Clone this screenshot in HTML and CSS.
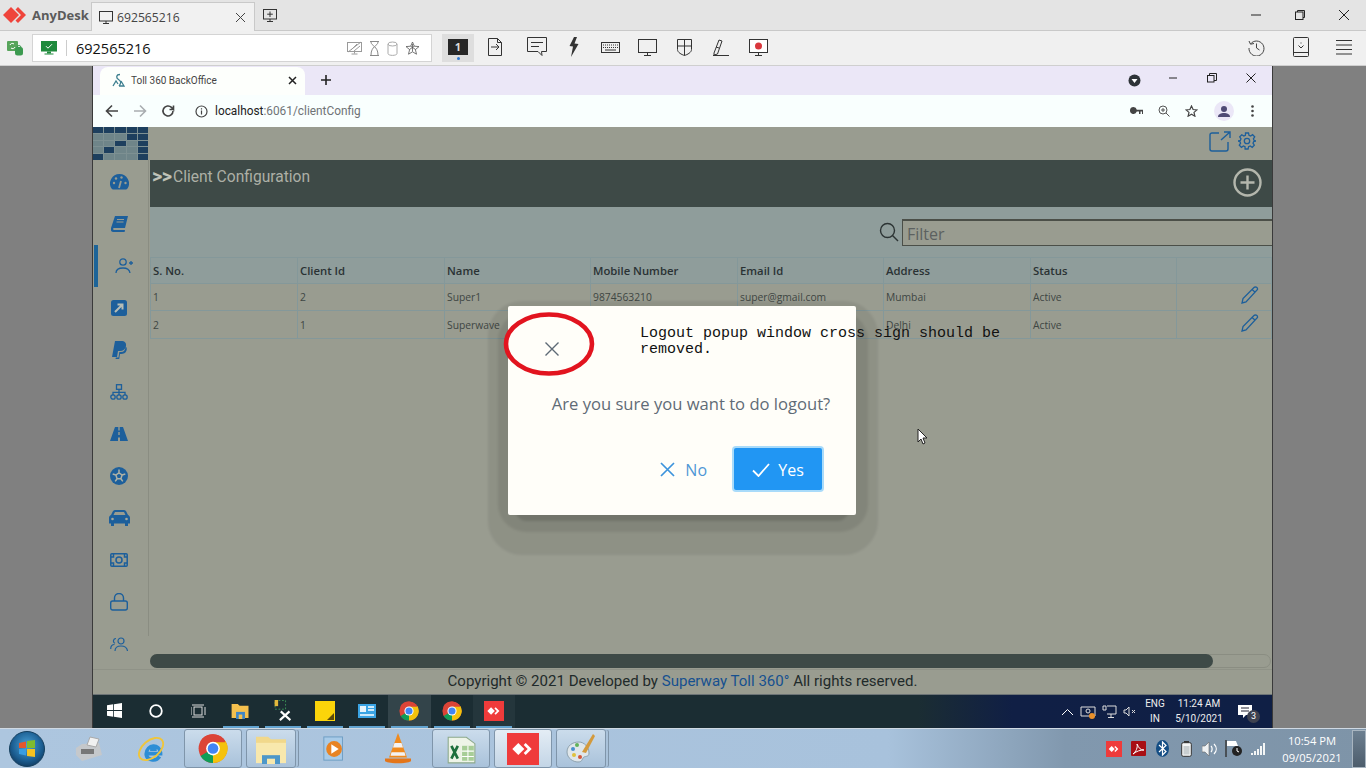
FILE: index.html
```html
<!DOCTYPE html>
<html lang="en">
<head>
<meta charset="utf-8">
<title>Toll 360 BackOffice</title>
<link rel="stylesheet" href="styles.css">
</head>
<body>
<svg class="defs" width="0" height="0" aria-hidden="true">
  <defs>
    <radialGradient id="orb" cx="50%" cy="40%" r="60%"><stop offset="0" stop-color="#4aa3d8"/><stop offset=".7" stop-color="#1c5f93"/><stop offset="1" stop-color="#123f66"/></radialGradient>
  </defs>
  <symbol id="chrome" viewBox="0 0 48 48">
    <circle cx="24" cy="24" r="23" fill="#db4437"/>
    <path d="M24 24 4 36A23 23 0 0 0 24 47l10-17z" fill="#0f9d58"/>
    <path d="M24 24 24 47A23 23 0 0 0 44 12H24z" fill="#f4c20d"/>
    <path d="M4 36 14 18 24 14h20A23 23 0 0 0 4 12z" fill="#db4437"/>
    <circle cx="24" cy="24" r="11" fill="#fff"/>
    <circle cx="24" cy="24" r="8.5" fill="#4285f4"/>
  </symbol>
  <symbol id="adsq" viewBox="0 0 24 24">
    <rect width="24" height="24" fill="#ef3b3b"/>
    <path d="M8.500 7.500 13 12l-4.500 4.500L4 12z" fill="#fff"/>
    <path d="M14 7.500 18.500 12 14 16.500l-1.500-1.500 3-3-3-3z" fill="#fff"/>
  </symbol>
</svg>

<header class="ad-tabs">
  <svg class="ad-logo" width="24" height="18" viewBox="0 0 24 18"><path d="M8 1l8 8-8 8-8-8z" fill="#ef443b"/><path d="M15 1l8 8-8 8-2.500-2.500L18 9l-5.500-5.500z" fill="#ef443b"/></svg>
  <span class="ad-name">AnyDesk</span>
  <div class="ad-tab">
    <svg width="16" height="15" viewBox="0 0 16 15" fill="none" stroke="#333"><rect x="1.500" y="1.500" width="13" height="9.500"/><path d="M8 11v2.500M5 13.500h6"/></svg>
    <span class="ad-tab-id">692565216</span>
    <svg class="ad-tab-x" width="11" height="11" viewBox="0 0 11 11" stroke="#444"><path d="M1 1l9 9M10 1l-9 9"/></svg>
  </div>
  <svg class="ad-new" width="16" height="15" viewBox="0 0 16 15" fill="none" stroke="#333"><rect x="1.500" y="1.500" width="13" height="9.500"/><path d="M8 3.500v5.500M5.200 6.200h5.600M8 11v2.500M5 13.500h6"/></svg>
  <div class="win-btns">
    <svg width="12" height="12" viewBox="0 0 12 12" stroke="#222"><path d="M1 6h10"/></svg>
    <svg width="12" height="12" viewBox="0 0 12 12" fill="none" stroke="#222"><rect x="1.500" y="3" width="7.500" height="7.500"/><path d="M3.500 3V1.500H10.500V8.500H9"/></svg>
    <svg width="12" height="12" viewBox="0 0 12 12" stroke="#222"><path d="M1 1l10 10M11 1 1 11"/></svg>
  </div>
</header>

<div class="ad-toolbar">
  <svg class="ad-status" width="16" height="16" viewBox="0 0 16 16"><rect x="0" y="1" width="11" height="10" rx="1" fill="#58a55c"/><path d="M3 5a2.500 2.500 0 0 1 4-1M8 7a2.500 2.500 0 0 1-4 1" stroke="#fff" fill="none"/><rect x="8" y="7" width="8" height="8.500" rx="2.500" fill="#3c9a50"/><path d="M10 7.500a2 2 0 0 1 4 0" stroke="#3c9a50" fill="none"/></svg>
  <div class="ad-address">
    <svg width="16" height="14" viewBox="0 0 16 14"><rect width="16" height="10.500" fill="#1f8a3c"/><rect x="6" y="10.500" width="4" height="2" fill="#1f8a3c"/><rect x="3.500" y="12.500" width="9" height="1" fill="#1f8a3c"/><path d="M5 5.200l2 2 4-4" stroke="#fff" fill="none"/></svg>
    <span class="ad-sep"></span>
    <span class="ad-id">692565216</span>
    <div class="ad-address-icons">
      <svg width="15" height="14" viewBox="0 0 15 14" fill="none" stroke="#9a9a9a"><rect x=".5" y="1.500" width="14" height="9"/><path d="M1 11 14 1M4 9 10 3M7 10 13 5M7.500 10.500v2M4.500 13h6"/></svg>
      <svg width="11" height="15" viewBox="0 0 11 15" fill="none" stroke="#8a8a8a"><path d="M1 .5h9M1 14.500h9M2 1c0 4 7 4 7 13M9 1c0 4-7 4-7 13"/></svg>
      <svg width="11" height="15" viewBox="0 0 11 15" fill="none" stroke="#aaa"><ellipse cx="5.500" cy="3" rx="4.500" ry="2"/><path d="M1 3v9.500c0 2.500 9 2.500 9 0V3"/></svg>
      <svg width="15" height="14" viewBox="0 0 15 14" fill="none" stroke="#555"><path d="M7.500 1l1.800 4.200 4.700.4-3.600 3 1.100 4.600-4-2.400-4 2.400 1.100-4.600-3.600-3 4.700-.4zM5.700 5.200l5 3.400M9.300 5.200l-5 3.400M7.500 3v7.500" stroke-width=".8"/></svg>
    </div>
  </div>
  <div class="ad-mon"><b>1</b><i></i></div>
  <div class="ad-tools">
    <svg class="t-file" width="14" height="18" viewBox="0 0 14 18" fill="none" stroke="#333"><path d="M.5.500h9l4 4v13H.500zM9.500.500v4h4M3 9h8M8 6l3 3-3 3"/></svg>
    <svg class="t-chat" width="20" height="20" viewBox="0 0 20 20" fill="none" stroke="#333"><path d="M.5.500h19v14h-5l.5 4-4-4H.500zM4 5.500h12M4 9.500h8"/></svg>
    <svg class="t-bolt" width="10" height="20" viewBox="0 0 10 20"><path d="M5 0h3L5.500 6.500 9.500 7 2 20l2-10.500L.5 9z" fill="#333"/></svg>
    <svg class="t-kb" width="19" height="11" viewBox="0 0 19 11" fill="none" stroke="#333"><rect x=".5" y=".5" width="18" height="10"/><path d="M2 3h15M2 5.500h15" stroke-dasharray="1 1"/><path d="M4 8h11"/></svg>
    <svg class="t-mon" width="19" height="17" viewBox="0 0 19 17" fill="none" stroke="#333"><rect x=".5" y=".5" width="18" height="13"/><path d="M9.500 13.500v3M6 16.500h7"/></svg>
    <svg class="t-shield" width="15" height="17" viewBox="0 0 15 17" fill="none" stroke="#333"><path d="M.5.500h14v10c0 3-4 5-7 6-3-1-7-3-7-6zM7.500.500v16M.5 7h14"/></svg>
    <svg class="t-pen" width="16" height="17" viewBox="0 0 16 17" fill="none" stroke="#333"><path d="M1 14 6 1l3 1-4.500 13-3.500 1zM3 8l3 1M0 16.500h16"/></svg>
    <svg class="t-rec" width="19" height="17" viewBox="0 0 19 17" fill="none" stroke="#333"><rect x=".5" y=".5" width="18" height="13" fill="#fff"/><circle cx="9.500" cy="7" r="3.500" fill="#d9373c" stroke="none"/><path d="M9.500 13.500v3M6 16.500h7"/></svg>
  </div>
  <div class="ad-right">
    <svg width="17" height="17" viewBox="0 0 17 17" fill="none" stroke="#444"><path d="M2.500 5A7.500 7.500 0 1 1 1 9M1 2l1.500 3.200L6 4.500M8.500 4.500V9l3 2"/></svg>
    <svg width="16" height="20" viewBox="0 0 16 20" fill="none" stroke="#333"><rect x=".5" y=".5" width="15" height="19" rx="1"/><path d="M.5 15.500h15M8 5.500v1M5.500 8.500 8 11l2.500-2.500" /></svg>
    <svg width="16" height="16" viewBox="0 0 16 16" stroke="#333"><path d="M0 1.500h16M0 6h16M0 10.500h16M0 15h16"/></svg>
  </div>
</div>

<div class="remote">
  <div class="window">
    <div class="cr-tabs">
      <div class="cr-tab">
        <svg width="13" height="15" viewBox="0 0 13 15" fill="none" stroke="#3d7f8f" stroke-width="1.300"><path d="M8 1.500C4 1.500 4 5 6.500 6.500S9.500 10 7 13M1 13l3-5 2 3M7 13h5L9 8"/></svg>
        <span class="cr-tab-title">Toll 360 BackOffice</span>
        <svg class="cr-tab-x" width="9" height="9" viewBox="0 0 9 9" stroke="#222" stroke-width="1.500"><path d="M1 1l7 7M8 1 1 8"/></svg>
      </div>
      <svg class="cr-new" width="12" height="12" viewBox="0 0 12 12" stroke="#222" stroke-width="1.600"><path d="M6 1v10M1 6h10"/></svg>
      <div class="cr-ctrls">
        <svg class="cr-prof" width="13" height="13" viewBox="0 0 13 13"><circle cx="6.500" cy="6.500" r="6" fill="#2e3338"/><path d="M3.500 5h6l-3 4z" fill="#fff"/></svg>
        <svg class="cr-min" width="10" height="10" viewBox="0 0 10 10" stroke="#222"><path d="M1 5h8"/></svg>
        <svg class="cr-max" width="10" height="10" viewBox="0 0 10 10" fill="none" stroke="#222"><rect x=".5" y="2.500" width="6.500" height="6.500"/><path d="M2.500 2.500V.5h7v7H7"/></svg>
        <svg class="cr-close" width="10" height="10" viewBox="0 0 10 10" stroke="#222"><path d="M.5.500l9 9M9.500.500l-9 9"/></svg>
      </div>
    </div>
    <div class="cr-bar">
      <svg class="nav" width="14" height="14" viewBox="0 0 14 14" fill="none" stroke="#444" stroke-width="1.600"><path d="M13 7H2M7 1.500 1.500 7 7 12.500"/></svg>
      <svg class="nav" width="14" height="14" viewBox="0 0 14 14" fill="none" stroke="#a9adb0" stroke-width="1.600"><path d="M1 7h11M7 1.500 12.500 7 7 12.500"/></svg>
      <svg class="nav" width="14" height="14" viewBox="0 0 14 14" fill="none" stroke="#444" stroke-width="1.600"><path d="M12 7a5 5 0 1 1-1.500-3.600L12.500 5.500V1.500M12.500 5.500H8.500"/></svg>
      <div class="omni">
        <svg width="13" height="13" viewBox="0 0 13 13" fill="none" stroke="#444" stroke-width="1.200"><circle cx="6.500" cy="6.500" r="5.500"/><path d="M6.500 5.500v4M6.500 3.200v1.200"/></svg>
        <span class="url"><b>localhost</b>:6061/clientConfig</span>
      </div>
      <div class="cr-icons">
        <svg class="ci" width="13" height="8" viewBox="0 0 13 8" fill="#444"><path d="M3.500 0a3.500 3.500 0 1 0 3.300 4.600H9V7h1.500V4.600H12V7h1V2.800H6.800A3.500 3.500 0 0 0 3.500 0z"/></svg>
        <svg class="ci" width="12" height="12" viewBox="0 0 12 12" fill="none" stroke="#555"><circle cx="5" cy="5" r="4"/><path d="M8 8l3.500 3.500M3 5h4M5 3v4"/></svg>
        <svg class="ci" width="13" height="12" viewBox="0 0 13 12" fill="none" stroke="#444" stroke-width="1.200"><path d="M6.500 1l1.600 3.500 3.900.4-3 2.500.9 3.800-3.400-2-3.400 2 .9-3.800-3-2.500 3.900-.4z"/></svg>
        <span class="avatar"><svg width="12" height="11" viewBox="0 0 12 11" fill="#4f4a75"><circle cx="6" cy="3" r="3"/><path d="M0 11c0-3 3-4 6-4s6 1 6 4z"/></svg></span>
        <svg class="ci dots" width="3" height="12" viewBox="0 0 3 12" fill="#444"><circle cx="1.500" cy="1.500" r="1.300"/><circle cx="1.500" cy="6" r="1.300"/><circle cx="1.500" cy="10.500" r="1.300"/></svg>
      </div>
    </div>

    <div class="page">
      <div class="page-main">
        <aside class="sidebar">
          <div class="logo">
            <i class="d"></i><i class="d"></i><i class="d"></i><i class="d"></i><i class="d"></i>
            <i></i><i></i><i></i><i class="d"></i><i class="d"></i>
            <i></i><i></i><i class="d"></i><i></i><i class="d"></i>
            <i></i><i class="d"></i><i></i><i></i><i class="d"></i>
            <i class="d"></i><i></i><i></i><i></i><i class="d"></i>
          </div>
          <nav class="side-nav">
            <a class="side-item"><svg width="19" height="16" viewBox="0 0 19 16"><path d="M9.500 0a9.500 9.500 0 0 0-8 14.600c.3.500.8.800 1.300.8h13.400c.5 0 1-.3 1.300-.8A9.500 9.500 0 0 0 9.500 0z" fill="#1d5f9b"/><path d="M9 14l2-7" stroke="#999c90" stroke-width="1.800"/><circle cx="4" cy="9" r="1.200" fill="#999c90"/><circle cx="6" cy="4.500" r="1.200" fill="#999c90"/><circle cx="11.500" cy="3.500" r="1.200" fill="#999c90"/><circle cx="15.500" cy="9" r="1.200" fill="#999c90"/></svg></a>
            <a class="side-item"><svg width="17" height="16" viewBox="0 0 17 16"><path d="M4 0h13l-3 12H3c-1 0-1.300 2 0 2h11l-.4 2H2c-2 0-2.500-2-2-4z" fill="#1d5f9b"/><path d="M6 3.500h7M5.500 6h7" stroke="#999c90"/></svg></a>
            <a class="side-item is-active"><svg width="18" height="16" viewBox="0 0 18 16" fill="none" stroke="#1d5f9b" stroke-width="1.300"><circle cx="8" cy="4" r="3.200"/><path d="M1 15c0-3.500 3-5 7-5s6.500 1.500 7 5M14 5h4M16 3v4"/></svg></a>
            <a class="side-item"><svg width="16" height="16" viewBox="0 0 16 16"><rect width="16" height="16" rx="2.500" fill="#1d5f9b"/><path d="M4 12 11 5M6.500 4.500H11.500V9.500" stroke="#b6bdb6" stroke-width="2" fill="none"/></svg></a>
            <a class="side-item"><svg width="15" height="18" viewBox="0 0 15 18" fill="#1d5f9b"><path d="M3 0h6c4 0 5.500 2 5 5-.6 3.500-3 5-6 5H6l-1 6H0z"/><path d="M13.500 5.500c1.500 1 1.500 2.500 1 4-.8 2.600-3 3.500-5.500 3.500H8L7.200 18H3.500l.4-1.500h2.600L7.300 11H9c3 0 4.500-2 4.500-5.500z"/></svg></a>
            <a class="side-item"><svg width="18" height="16" viewBox="0 0 18 16" fill="none" stroke="#1d5f9b" stroke-width="1.300"><rect x="6.500" y=".7" width="5" height="4.600"/><path d="M9 5.300V8M3 11V8.300h12V11M9 8v3"/><circle cx="3" cy="13" r="2.200"/><circle cx="9" cy="13" r="2.200"/><circle cx="15" cy="13" r="2.200"/></svg></a>
            <a class="side-item"><svg width="18" height="14" viewBox="0 0 18 14" fill="#1d5f9b"><path d="M5 0h3.300v3.500h1.400V0H13l5 14h-8V10.500H8V14H0zM8.300 5v3h1.400V5z"/></svg></a>
            <a class="side-item"><svg width="18" height="18" viewBox="0 0 18 18"><circle cx="9" cy="9" r="9" fill="#1d5f9b"/><path d="M9 5.800 5.900 8l1.200 3.700h3.800L12.100 8zM9 5.800V2.500M5.900 8 2.700 7M12.100 8l3.200-1M7.100 11.700 5.200 14.400M10.900 11.700l1.900 2.700" stroke="#aeb1a5" stroke-width="1.500" fill="none"/></svg></a>
            <a class="side-item"><svg width="21" height="16" viewBox="0 0 21 16" fill="#1d5f9b"><path d="M6 0h9c1.500 0 2 1 2.500 2L19 5c1.300.5 2 1.500 2 3v5.500h-2V16h-3v-2.500H5V16H2v-2.500H0V8c0-1.500.7-2.500 2-3l1.500-3C4 1 4.500 0 6 0zm0 2-1.500 3h12L15 2z"/><circle cx="3.500" cy="9" r="1.300" fill="#a5a89c"/><circle cx="17.500" cy="9" r="1.300" fill="#a5a89c"/></svg></a>
            <a class="side-item"><svg width="18" height="14" viewBox="0 0 18 14" fill="none" stroke="#1d5f9b" stroke-width="1.500"><rect x=".8" y=".8" width="16.400" height="12.400" rx="1"/><circle cx="9" cy="7" r="3"/><path d="M1 4h2.500V1M17 4h-2.500V1M1 10h2.500v3M17 10h-2.500v3"/></svg></a>
            <a class="side-item"><svg width="18" height="18" viewBox="0 0 18 18" fill="none" stroke="#1d5f9b" stroke-width="1.400"><rect x=".7" y="8" width="16.600" height="9" rx="2"/><path d="M4.500 8V5a4.500 4.500 0 0 1 9 0v3"/></svg></a>
            <a class="side-item"><svg width="18" height="15" viewBox="0 0 18 15" fill="none" stroke="#1d5f9b" stroke-width="1.200"><circle cx="11" cy="4" r="3"/><path d="M5 14c0-3.500 2.500-5 6-5s6 1.500 6.500 5M6 1.500a2.500 2.500 0 0 0-1 4.800M.7 12c0-3 1.500-4.500 3.800-4.500"/></svg></a>
          </nav>
        </aside>
        <main class="content">
          <div class="top-actions">
            <svg width="22" height="21" viewBox="0 0 22 21" fill="none" stroke="#1d5f9b" stroke-width="1.400"><path d="M10 2H3a2 2 0 0 0-2 2v14a2 2 0 0 0 2 2h14a2 2 0 0 0 2-2v-7M12 9l9-8M15 1h6v6"/></svg>
            <svg width="18" height="18" viewBox="0 0 18 18" fill="none" stroke="#1d5f9b" stroke-width="1.300"><circle cx="9" cy="9" r="2.700"/><path d="M7.500 1h3l.5 2.300 1.600.7 2-1.300 2.100 2.100-1.300 2 .7 1.600L18 9v0l-2.300.5-.7 1.700 1.300 2-2.100 2.100-2-1.300-1.600.7-.5 2.300h-3L7 14.700l-1.600-.7-2 1.300-2.100-2.100 1.300-2-.7-1.700L0 9l2.300-.5.700-1.600-1.300-2 2.100-2.100 2 1.300L7.400 3.300z"/></svg>
          </div>
          <div class="title-bar">
            <h1 class="title"><span class="chev">&gt;&gt;</span>Client Configuration</h1>
            <svg class="add" width="29" height="29" viewBox="0 0 29 29" fill="none" stroke="#b4b7ad" stroke-width="2.400"><circle cx="14.500" cy="14.500" r="13"/><path d="M14.500 7.500v14M7.500 14.500h14"/></svg>
          </div>
          <div class="filter-bar">
            <svg width="20" height="20" viewBox="0 0 20 20" fill="none" stroke="#2c3434" stroke-width="1.400"><circle cx="8.500" cy="8.500" r="7"/><path d="M13.500 13.500l5.500 5.500"/></svg>
            <div class="filter-input">Filter</div>
          </div>
          <table class="grid">
            <colgroup><col class="c1"><col class="c1"><col class="c2"><col class="c1"><col class="c2"><col class="c1"><col class="c2"><col></colgroup>
            <thead><tr><th>S. No.</th><th>Client Id</th><th>Name</th><th>Mobile Number</th><th>Email Id</th><th>Address</th><th>Status</th><th></th></tr></thead>
            <tbody>
              <tr><td>1</td><td>2</td><td>Super1</td><td>9874563210</td><td>super@gmail.com</td><td>Mumbai</td><td>Active</td><td class="edit"><svg width="18" height="18" viewBox="0 0 18 18" fill="none" stroke="#1d5f9b" stroke-width="1.300"><path d="M13 1.500c1-1 4-.5 3.500 2L5 16l-4 1 1-4.500zM11 3.500l3.500 3"/></svg></td></tr>
              <tr><td>2</td><td>1</td><td>Superwave</td><td></td><td></td><td>Delhi</td><td>Active</td><td class="edit"><svg width="18" height="18" viewBox="0 0 18 18" fill="none" stroke="#1d5f9b" stroke-width="1.300"><path d="M13 1.500c1-1 4-.5 3.500 2L5 16l-4 1 1-4.500zM11 3.500l3.500 3"/></svg></td></tr>
            </tbody>
          </table>
          <div class="h-scroll"><div class="h-thumb"></div></div>
        </main>
      </div>
      <footer class="copy">Copyright © 2021 Developed by <a>Superway Toll 360°</a> All rights reserved.</footer>

      <div class="dlg-shadow s1"></div>
      <div class="dlg-shadow s2"></div>
      <div class="dlg-shadow s3"></div>
      <section class="dialog">
        <svg class="dlg-x" width="14" height="14" viewBox="0 0 14 14" stroke="#5d6a75" stroke-width="1.400"><path d="M.5.500l13 13M13.500.500l-13 13"/></svg>
        <p class="dlg-msg">Are you sure you want to do logout?</p>
        <div class="dlg-actions">
          <button class="btn-no"><svg width="15" height="15" viewBox="0 0 15 15" stroke="#3d93dc" stroke-width="1.700"><path d="M1 1l13 13M14 1 1 14"/></svg>No</button>
          <button class="btn-yes"><svg width="18" height="14" viewBox="0 0 18 14" fill="none" stroke="#fff" stroke-width="1.800"><path d="M1 7.500 6.500 13 17 1"/></svg>Yes</button>
        </div>
        <svg class="ring" width="92" height="66" viewBox="0 0 92 66" fill="none"><ellipse cx="46" cy="33" rx="43" ry="29.500" stroke="#e2141f" stroke-width="4.600"/></svg>
        <p class="note">Logout popup window cross sign should be<br>removed.</p>
      </section>
      <svg class="cursor" width="12" height="18" viewBox="0 0 12 18"><path d="M1 1v13l3-3 2 5 2-1-2-5h4z" fill="#fff" stroke="#222"/></svg>
    </div>

    <div class="w10bar">
      <div class="w10-apps">
        <span class="w10-slot"><svg width="15" height="15" viewBox="0 0 15 15" fill="#fff"><path d="M0 2.200 6.200 1.300V7H0zM7 1.200 15 0v7H7zM0 8h6.200v5.700L0 12.800zM7 8h8v7l-8-1.200z"/></svg></span>
        <span class="w10-slot"><svg width="14" height="14" viewBox="0 0 14 14" fill="none" stroke="#fff" stroke-width="1.800"><circle cx="7" cy="7" r="5.800"/></svg></span>
        <span class="w10-slot"><svg width="15" height="14" viewBox="0 0 15 14" fill="none" stroke="#ddd"><rect x="3" y="3" width="8" height="8"/><path d="M1 1h12M1 13h12M14 3v8M0 3v8"/></svg></span>
        <span class="w10-slot on"><svg width="19" height="16" viewBox="0 0 20 18"><path d="M0 1h7l2 2h10v14H0z" fill="#f4c04e"/><rect x="5" y="10" width="10" height="8" fill="#3f86c6"/><rect x="8" y="13" width="4" height="5" fill="#f4c04e"/></svg></span>
        <span class="w10-slot on"><svg width="21" height="21" viewBox="0 0 22 24" fill="none"><rect x="2.500" y=".5" width="12" height="10" stroke="#3f9b5a" stroke-dasharray="2 2"/><rect x="2" y="0" width="4" height="7" fill="#e3b93c"/><path d="M9 13l11 10M19 13 8 23" stroke="#fff" stroke-width="2.400"/></svg></span>
        <span class="w10-slot on"><svg width="20" height="20" viewBox="0 0 20 20"><rect width="20" height="20" fill="#fbd40a"/><path d="M19 12v7h-7z" fill="#5c4a0a"/></svg></span>
        <span class="w10-slot on"><svg width="18" height="14" viewBox="0 0 18 14"><rect width="18" height="14" fill="#3ba4e4"/><rect x="2" y="2" width="6" height="6" fill="#e7f4fb"/><path d="M10 3h6M10 6h6M2 11h14" stroke="#fff" stroke-width="1.300"/></svg></span>
        <span class="w10-slot on act"><svg width="20" height="20" viewBox="0 0 48 48"><use href="#chrome"/></svg></span>
        <span class="w10-slot on"><svg width="20" height="20" viewBox="0 0 48 48"><use href="#chrome"/></svg></span>
        <span class="w10-slot on soft"><svg width="20" height="20" viewBox="0 0 24 24"><use href="#adsq"/></svg></span>
      </div>
      <div class="w10-tray">
        <svg width="13" height="8" viewBox="0 0 13 8" fill="none" stroke="#fff"><path d="M1 7l5.500-5.500L12 7"/></svg>
        <svg width="16" height="15" viewBox="0 0 16 15" fill="none" stroke="#ddd"><path d="M1 3h14v9H1z"/><circle cx="8" cy="7" r="2"/><circle cx="12" cy="12" r="3" fill="#e9902a" stroke="none"/></svg>
        <svg width="15" height="14" viewBox="0 0 15 14" fill="none" stroke="#ddd"><path d="M5 1h9v8H5M1 1h3v4H1zM9 9v3M6 12.500h6"/></svg>
        <svg width="13" height="11" viewBox="0 0 13 11" fill="none" stroke="#ddd"><path d="M1 4h2l3-3v9L3 7H1zM9 4l3 3M12 4 9 7"/></svg>
        <span class="lang">ENG<br>IN</span>
        <span class="clock">11:24 AM<br>5/10/2021</span>
        <span class="notif"><svg width="14" height="13" viewBox="0 0 14 13"><path d="M0 0h14v10H8l-3 3v-3H0z" fill="#fff"/><path d="M3 3h8M3 6h8" stroke="#223"/></svg><i>3</i></span>
      </div>
    </div>
  </div>
</div>

<footer class="w7bar">
  <div class="w7-apps">
    <span class="w7-slot"><svg width="36" height="36" viewBox="0 0 36 36"><circle cx="18" cy="18" r="17.500" fill="url(#orb)" stroke="#16405f"/><path d="M10 12l7-1.500v6.500h-7z" fill="#e5572d"/><path d="M18 10l8-1v8h-8z" fill="#7fbb30"/><path d="M10 18h7v6.500l-7-1.500z" fill="#3a9de0"/><path d="M18 18h8v8l-8-1z" fill="#f5c220"/></svg></span>
    <span class="w7-slot"><svg width="26" height="28" viewBox="0 0 26 28"><path d="M0 13l6-4 17-1 3 12-20 6-6-6z" fill="#c5c8cb"/><path d="M14 2l9 2-3 8-9-2z" fill="#f1f1f1" stroke="#aaa"/><rect x="5" y="14" width="13" height="5" fill="#777"/></svg></span>
    <span class="w7-slot"><svg width="32" height="34" viewBox="0 0 34 34" fill="none"><path d="M26 22H11c.5-10 14-11 15-1zM11 22c0 7 10 9 14 3M15 17h7" stroke="#2d8ed6" stroke-width="4"/><ellipse cx="16" cy="17" rx="15" ry="9" transform="rotate(-40 16 17)" stroke="#efc53b" stroke-width="2"/></svg></span>
    <span class="w7-slot btn"><svg width="30" height="31" viewBox="0 0 48 48"><use href="#chrome"/></svg></span>
    <span class="w7-slot btn stack"><svg width="32" height="30" viewBox="0 0 32 34" preserveAspectRatio="none"><path d="M1 3h12l3 3h15v27H1z" fill="#f1d88b"/><path d="M1 10h30v23H1z" fill="#f8e8ad"/><rect x="7" y="24" width="18" height="10" fill="#4d97c9"/><rect x="12" y="28" width="8" height="6" fill="#f8e8ad"/></svg></span>
    <span class="w7-slot"><svg width="26" height="26" viewBox="0 0 26 28"><rect x="1" y="1" width="20" height="25" fill="#a8cbe8" stroke="#6b9cc3"/><circle cx="12" cy="14" r="8.500" fill="#e88323"/><path d="M9 9l8 5-8 5z" fill="#fff"/></svg></span>
    <span class="w7-slot"><svg width="26" height="31" viewBox="0 0 26 34" preserveAspectRatio="none"><path d="M13 0l9 27H4z" fill="#f08a1d"/><path d="M9.500 11h7l1.500 5H8zM6.500 21h13l1 4H5.500z" fill="#f3f3f3"/><path d="M0 28h26v3c-5 3-21 3-26 0z" fill="#e4761a"/></svg></span>
    <span class="w7-slot btn wide"><svg width="32" height="32" viewBox="0 0 30 30"><path d="M3 4h17l8 6v18H3z" fill="#eef4e8" stroke="#8da98b"/><path d="M16 12h11v14H16z" fill="#a7cd97"/><path d="M16 17h11M16 22h11M21.500 12v14" stroke="#fff"/><path d="M4 12h11v12H4z" fill="#eaf2e2"/><path d="M6 12l6 12M12 12 6 24" stroke="#1d6f3c" stroke-width="2.500"/></svg></span>
    <span class="w7-slot btn light"><svg width="32" height="32" viewBox="0 0 24 24"><use href="#adsq"/></svg></span>
    <span class="w7-slot btn stack"><svg width="30" height="32" viewBox="0 0 30 32"><path d="M13 9C6 9 1 13 1 19c0 6 6 10 11 10 5 0 4-4 6-5s5 0 5-4c0-6-5-11-10-11z" fill="#dfe6ea" stroke="#8ea2ae"/><circle cx="7" cy="16" r="2" fill="#4a8fcf"/><circle cx="11" cy="12" r="2" fill="#61b25b"/><circle cx="8" cy="22" r="2" fill="#e0c13c"/><circle cx="14" cy="24" r="2" fill="#d2553d"/><path d="M27 1l2 2-9 17-4-1z" fill="#d39a3d"/></svg></span>
  </div>
  <div class="w7-tray">
    <svg width="16" height="16" viewBox="0 0 24 24"><use href="#adsq"/></svg>
    <svg width="15" height="15" viewBox="0 0 15 15"><rect width="15" height="15" rx="1" fill="#a80f14"/><path d="M2 13c3-2 5-7 4-10 2 4 3 6 7 6-4 0-7 1-11 4z" fill="none" stroke="#fff"/></svg>
    <svg width="13" height="17" viewBox="0 0 13 17"><ellipse cx="6.500" cy="8.500" rx="6.500" ry="8.500" fill="#134d84"/><path d="M3 5l7 6.500-3.500 3.500v-13L10 5.500 3 12" fill="none" stroke="#fff" stroke-width="1.200"/></svg>
    <svg width="11" height="16" viewBox="0 0 11 16"><rect x="3" y="0" width="5" height="2" fill="#333"/><rect x=".7" y="1.700" width="9.600" height="13.600" rx="1.500" fill="#f4f6f6" stroke="#333"/><rect x="2.500" y="5" width="6" height="8.500" fill="#c8ced0"/></svg>
    <svg width="16" height="14" viewBox="0 0 16 14" fill="none"><path d="M0 4h3l4-4v14l-4-4H0z" fill="#eef1f3" stroke="#666" stroke-width=".6"/><path d="M9 4c1.500 1.500 1.500 4.500 0 6M12 2c3 3 3 7 0 10" stroke="#fff" stroke-width="1.200"/></svg>
    <svg width="18" height="17" viewBox="0 0 18 17"><path d="M1 0v17" stroke="#333" stroke-width="1.400"/><path d="M2 1h9l2 5H2z" fill="#fff"/><circle cx="12" cy="11" r="5" fill="#222"/><path d="M12 8v3l2 1" stroke="#fff" fill="none"/></svg>
    <svg width="15" height="12" viewBox="0 0 15 12" fill="#f4f6f6"><rect x="0" y="10" width="2" height="2"/><rect x="3" y="8" width="2" height="4"/><rect x="6" y="6" width="2" height="6"/><rect x="9" y="3" width="2" height="9"/><rect x="12" y="0" width="2" height="12"/></svg>
    <span class="w7-clock">10:54 PM<br>09/05/2021</span>
    <span class="show-desktop"></span>
  </div>
</footer>
</body>
</html>
```

FILE: styles.css
```css
* { box-sizing: border-box; }
html, body { margin: 0; padding: 0; }
body {
  width: 1366px;
  height: 768px;
  overflow: hidden;
  display: flex;
  flex-direction: column;
  font-family: "Open Sans", "Liberation Sans", sans-serif;
  background: #808080;
}
svg { display: block; flex: none; }
.defs { position: absolute; }

/* AnyDesk tabs */
.ad-tabs {
  height: 31px;
  flex: none;
  display: flex;
  align-items: center;
  background: #e4e4e4;
  border-bottom: 1px solid #c9c9c9;
  padding-left: 3px;
}
.ad-name { margin-left: 5px; font-size: 13px; font-weight: 700; color: #5b5b5b; width: 59px; }
.ad-tab {
  align-self: flex-end;
  width: 164px;
  height: 29px;
  margin-bottom: -1px;
  display: flex;
  align-items: center;
  padding-left: 6px;
  background: #f1f1f1;
  border: 1px solid #c9c9c9;
  border-bottom: 0;
}
.ad-tab-id { margin-left: 3px; font-size: 12.2px; color: #444; }
.ad-tab-x { margin-left: 55px; }
.ad-new { margin-left: 7px; }
.win-btns { margin-left: auto; width: 116px; padding-right: 16px; display: flex; justify-content: space-between; }

/* AnyDesk toolbar */
.ad-toolbar {
  height: 35px;
  flex: none;
  display: flex;
  align-items: center;
  background: #f0f0f0;
  border-bottom: 1px solid #cfcfcf;
  padding-left: 7px;
}
.ad-address {
  width: 400px;
  height: 28px;
  margin-left: 9px;
  display: flex;
  align-items: center;
  padding-left: 8px;
  background: #fff;
  border: 1px solid #d4d4d4;
}
.ad-sep { width: 1px; height: 16px; background: #ccc; margin-left: 9px; }
.ad-id { margin-left: 9px; font-size: 14.5px; color: #111; }
.ad-address-icons { margin-left: auto; margin-right: 11px; display: flex; align-items: center; gap: 7px; }
.ad-mon {
  width: 32px;
  height: 28px;
  margin-left: 10px;
  background: #dedede;
  display: flex;
  flex-direction: column;
  align-items: center;
  padding-top: 5px;
}
.ad-mon b { width: 20px; height: 16px; background: #272727; color: #ddd; font-size: 11px; line-height: 16px; text-align: center; }
.ad-mon i { width: 3px; height: 3px; border-radius: 50%; background: #2f78d0; margin-top: 2px; }
.ad-tools { display: flex; align-items: center; margin-left: 14px; margin-top: -2px; }
.t-chat { margin-left: 25px; }
.t-bolt { margin-left: 22px; }
.t-kb { margin-left: 22px; }
.t-mon { margin-left: 18px; }
.t-shield { margin-left: 20px; }
.t-pen { margin-left: 21px; }
.t-rec { margin-left: 20px; }
.ad-right { margin-left: auto; margin-top: -2px; width: 118px; padding-right: 14px; display: flex; align-items: center; justify-content: space-between; }

/* Remote area */
.remote { height: 662px; flex: none; padding-left: 92px; background: #808080; }
.window {
  width: 1181px;
  height: 662px;
  display: flex;
  flex-direction: column;
  border-left: 1px solid #3a3a3a;
  border-right: 1px solid #3a3a3a;
}

/* Chrome */
.cr-tabs { height: 29px; flex: none; display: flex; align-items: flex-end; background: #ebe7f7; padding-left: 7px; }
.cr-tab {
  width: 205px;
  height: 28px;
  display: flex;
  align-items: center;
  padding: 0 8px 2px 12px;
  background: #fdfffc;
  border-radius: 8px 8px 0 0;
}
.cr-tab-title { margin-left: 6px; font-size: 10px; color: #444; font-family: "Roboto", sans-serif; }
.cr-tab-x { margin-left: auto; }
.cr-new { margin: 0 0 9px 15px; }
.cr-ctrls { margin-left: auto; align-self: stretch; display: flex; align-items: center; padding: 0 16px 6px 0; }
.cr-min { margin-left: 27px; }
.cr-max { margin-left: 29px; }
.cr-close { margin-left: 29px; }
.cr-prof { margin-top: 5px; }
.cr-bar { height: 32px; flex: none; display: flex; align-items: center; background: #f9fffe; padding-left: 12px; }
.nav { margin-right: 14px; }
.omni { height: 26px; display: flex; align-items: center; margin-left: 6px; gap: 7px; }
.url { font-size: 11.85px; color: #6f7376; font-family: "Roboto", sans-serif; }
.url b { font-weight: 400; color: #222; }
.cr-icons { margin-left: auto; display: flex; align-items: center; padding-right: 18px; }
.cr-icons .ci { margin-left: 15px; }
.avatar { width: 20px; height: 20px; border-radius: 50%; background: #ebe7f7; margin-left: 16px; display: flex; align-items: center; justify-content: center; }
.cr-icons .dots { margin-left: 17px; }

/* Page */
.page { position: relative; flex: 1; min-height: 0; display: flex; flex-direction: column; background: #999c90; }
.page-main { flex: 1; min-height: 0; display: flex; }
.sidebar { position: relative; width: 57px; flex: none; }
.sidebar::after { content: ""; position: absolute; right: 1px; top: 33px; height: 476px; width: 1px; background: #8a8d82; }
.logo { height: 33px; width: 55px; display: grid; grid-template-columns: repeat(5, 1fr); grid-template-rows: repeat(5, 1fr); gap: 1px; background: #7d9092; }
.logo i { background: #6f8589; }
.logo i.d { background: #1d3f5e; }
.side-nav { padding-top: 1px; }
.side-item { height: 42px; display: flex; align-items: center; justify-content: center; padding-right: 5px; }
.side-item.is-active { border-left: 4px solid #1d6498; margin-left: 1px; padding-right: 0; }
.content { flex: 1; min-width: 0; display: flex; flex-direction: column; }
.top-actions { height: 33px; flex: none; display: flex; align-items: center; justify-content: flex-end; gap: 7px; padding: 0 16px 5px 0; }
.title-bar { height: 47px; flex: none; background: #3e4a47; display: flex; align-items: flex-start; padding: 7px 0 0 2px; }
.title { margin: 0; font-size: 15.6px; line-height: 20px; font-weight: 400; color: #adb0a6; font-family: "Roboto", sans-serif; display: flex; }
.chev { font-weight: 700; font-size: 20px; line-height: 18px; letter-spacing: -.5px; width: 21px; color: #bfc2b8; }
.add { margin: 1px 10px 0 auto; }
.filter-bar { height: 50px; flex: none; display: flex; align-items: center; justify-content: flex-end; background: #8f9d9b; }
.filter-input {
  width: 370px;
  height: 27px;
  margin-left: 3px;
  padding: 4px 0 0 4px;
  background: #999c90;
  border: 1px solid #4b4f48;
  border-right: 0;
  border-width: 2px 0 1px 1px;
  font-size: 16px;
  line-height: 19px;
  color: #5c6160;
}
.grid { width: 1122px; border-collapse: collapse; table-layout: fixed; flex: none; }
.grid .c1 { width: 147px; }
.grid .c2 { width: 146px; }
.grid th, .grid td { border: 1px solid #84989a; padding: 0 0 0 2px; text-align: left; overflow: hidden; white-space: nowrap; }
.grid th { height: 26px; background: #8f9d9b; font-size: 11.3px; font-weight: 600; color: #2a3234; }
.grid td { height: 27px; font-size: 10.3px; color: #3e4643; }
.grid tbody tr:last-child td { height: 28px; }
.grid .edit { padding: 0 12px 0 0; }
.grid .edit svg { margin: -4px 0 0 auto; }
.h-scroll { margin-top: auto; margin-bottom: 1px; width: 1121px; height: 14px; border: 1px solid #8a8d82; border-radius: 7px; }
.h-thumb { width: 1063px; height: 14px; margin: -1px 0 0 -1px; background: #3e4a47; border-radius: 7px; }
.copy {
  height: 25px;
  flex: none;
  border-top: 1px solid #8f9287;
  text-align: center;
  font-size: 15.05px;
  line-height: 22px;
  color: #1f2a2a;
  font-family: "Roboto", sans-serif;
}
.copy a { color: #16508f; }

/* Dialog */
.dlg-shadow { position: absolute; filter: blur(1px); }
.s1 { left: 395px; top: 174px; width: 390px; height: 254px; border-radius: 34px; background: rgba(0, 0, 0, .07); }
.s2 { left: 405px; top: 185px; width: 370px; height: 220px; border-radius: 28px; background: rgba(0, 0, 0, .08); }
.s3 { left: 422px; top: 213px; width: 334px; height: 181px; border-radius: 12px; background: rgba(0, 0, 0, .12); }
.dialog {
  position: absolute;
  left: 415px;
  top: 179px;
  width: 348px;
  height: 209px;
  background: #fffef9;
  border-radius: 2px;
}
.dlg-x { position: absolute; left: 37px; top: 36px; }
.dlg-msg { position: absolute; left: 0; right: 0; top: 86px; margin: 0; padding-left: 18px; text-align: center; font-size: 16.6px; line-height: 24px; color: #5f6b76; white-space: nowrap; }
.dlg-actions { position: absolute; right: 34px; top: 142px; display: flex; align-items: center; gap: 27px; }
.btn-no, .btn-yes { display: flex; align-items: center; border: 0; padding: 1px 0 0; font: inherit; font-size: 16px; cursor: pointer; }
.btn-no { gap: 10px; background: none; color: #4f97d6; }
.btn-yes { width: 88px; height: 42px; justify-content: center; gap: 8px; background: #2196f3; color: #fff; border-radius: 2px; box-shadow: 0 0 0 2px #a9dbfa; }
.ring { position: absolute; left: -5px; top: 5px; }
.note { position: absolute; left: 132px; top: 20px; margin: 0; font-family: "Liberation Mono", monospace; font-size: 15px; line-height: 16px; color: #111; white-space: nowrap; }
.cursor { position: absolute; left: 824px; top: 301px; }

/* Windows 10 taskbar */
.w10bar { height: 34px; flex: none; display: flex; background: linear-gradient(90deg, #1b2d33, #1b2d33 70%, #101f45 78%, #0f1f45); border-top: 1px solid #6c7376; }
.w10-apps { display: flex; }
.w10-slot { position: relative; width: 42.2px; height: 33px; display: flex; align-items: center; justify-content: center; padding-bottom: 2px; }
.w10-slot.on::after { content: ""; position: absolute; left: 3px; right: 3px; bottom: 0; height: 2px; background: #62a3d0; }
.w10-slot.act { background: #33444a; }
.w10-slot.soft { background: #24363c; }
.w10-tray { margin-left: auto; display: flex; align-items: center; color: #eee; font-family: "Roboto", sans-serif; font-size: 10px; line-height: 15px; padding-right: 8px; gap: 6px; text-align: center; }
.lang { width: 26px; margin-top: -2px; }
.clock { margin-left: -2px; width: 54px; margin-top: -2px; }
.notif { position: relative; width: 26px; margin-left: 6px; }
.notif i { position: absolute; left: 9px; top: 5px; width: 13px; height: 13px; border-radius: 50%; background: #3e4250; color: #fff; font-style: normal; font-size: 9px; line-height: 13px; text-align: center; }

/* Windows 7 taskbar */
.w7bar { height: 40px; flex: none; display: flex; background: linear-gradient(90deg, #adc6df, #a8c2dc 65%, #8198ae 78%, #7e94a8); border-top: 1px solid #cfd9e3; }
.w7-apps { display: grid; grid-template-columns: 54px 62px 56px 58px 50px 70px 48px 64px 58px 50px; column-gap: 4px; height: 39px; }
.w7-slot { display: flex; align-items: center; justify-content: center; height: 39px; }
.w7-slot.btn { border: 1px solid #7f95aa; border-radius: 3px; background: linear-gradient(#cbdcec, #a9c2da); }
.w7-slot.wide { margin-left: 6px; }
.w7-slot.light { background: linear-gradient(#e4edf5, #c3d5e6); }
.w7-slot.stack { box-shadow: 3px 0 0 -1px #a9c2da, 4px 0 0 -1px #7f95aa; }
.w7-tray { margin-left: auto; display: grid; grid-auto-flow: column; grid-auto-columns: 24px; justify-items: center; align-items: center; }
.w7-clock { width: 72px; justify-self: start; text-align: center; color: #fff; font-family: "Open Sans", sans-serif; font-size: 11.2px; line-height: 17px; white-space: nowrap; }
.w7-tray .w7-clock { grid-column: span 3; margin-left: 6px; }
.show-desktop { width: 14px; height: 38px; justify-self: end; background: linear-gradient(#6c7f90, #4d5d6c); border: 1px solid #a8b5c0; }
```
